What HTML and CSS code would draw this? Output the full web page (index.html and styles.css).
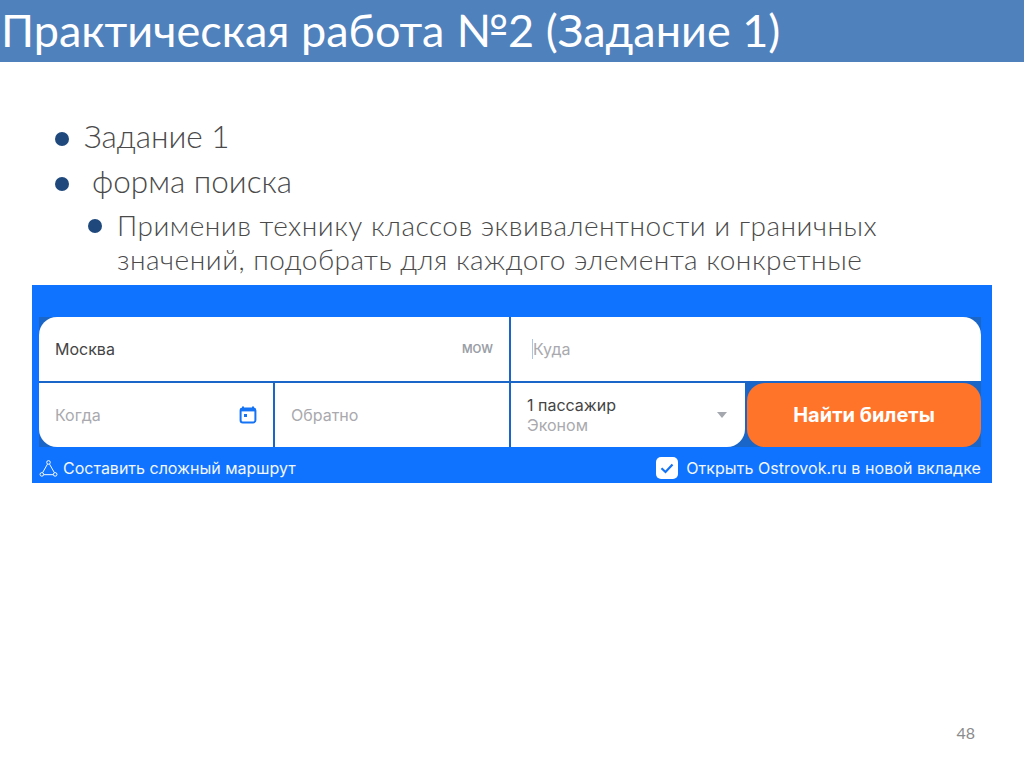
FILE: index.html
```html
<!DOCTYPE html>
<html lang="ru">
<head>
<meta charset="utf-8">
<title>Практическая работа №2</title>
<link rel="stylesheet" href="styles.css">
</head>
<body>
<div class="slide">
  <header class="title-bar"><h1 class="title">Практическая работа №2 (Задание 1)</h1></header>
  <main class="content">
    <ul class="list">
      <li class="item">Задание 1</li>
      <li class="item item-gap">форма поиска</li>
      <li class="item sub">Применив технику классов эквивалентности и граничных значений, подобрать для каждого элемента конкретные</li>
    </ul>
    <section class="form">
      <div class="grid">
        <div class="cell from"><span class="val">Москва</span><span class="code">MOW</span></div>
        <div class="cell to"><span class="caret"></span><span class="ph">Куда</span></div>
        <div class="cell when"><span class="ph">Когда</span>
          <svg class="cal" viewBox="0 0 18 18" width="18" height="18"><path d="M4 0.5v3M14 0.5v3" stroke="#1573f5" stroke-width="2"/><rect x="1.6" y="2.4" width="14.8" height="14" rx="2.2" fill="none" stroke="#1573f5" stroke-width="2"/><rect x="1.6" y="2.4" width="14.8" height="3" fill="#1573f5"/><rect x="5" y="8" width="3" height="3" fill="#1573f5"/></svg>
        </div>
        <div class="cell back"><span class="ph">Обратно</span></div>
        <div class="cell pax"><div class="pax-text"><span class="val">1 пассажир</span><span class="ph">Эконом</span></div><span class="arrow"></span></div>
        <button class="find" type="button">Найти билеты</button>
      </div>
      <div class="foot">
        <a class="foot-link">
          <svg viewBox="0 0 20 20" width="19" height="19" class="route"><path d="M8.9 5.4 3.9 14.2M11.1 5.4l5 8.8M5 16.5h10" fill="none" stroke="#fff" stroke-width="1"/><circle cx="10" cy="3.6" r="1.9" fill="none" stroke="#fff" stroke-width="1"/><circle cx="3" cy="16.2" r="1.9" fill="none" stroke="#fff" stroke-width="1"/><circle cx="17" cy="16.2" r="1.9" fill="none" stroke="#fff" stroke-width="1"/></svg>
          Составить сложный маршрут
        </a>
        <label class="foot-check">
          <svg viewBox="0 0 22 22" width="22" height="22"><rect width="22" height="22" rx="5" fill="#fff"/><path d="M5.5 11.2 9.5 15l7-7.5" fill="none" stroke="#1573f5" stroke-width="2.2"/></svg>
          Открыть Ostrovok.ru в новой вкладке
        </label>
      </div>
    </section>
    <div class="page">48</div>
  </main>
</div>
</body>
</html>
```
FILE: styles.css
```css
* { box-sizing: border-box; }
html, body { margin: 0; height: 100%; background: #fff; }
.slide { width: 1024px; height: 767px; display: flex; flex-direction: column; overflow: hidden; font-family: Lato, "Open Sans", sans-serif; }
.title-bar { height: 62px; flex: none; background: #4f81bd; padding: 0 0 2px 1px; display: flex; align-items: center; }
.title { margin: 0; font-size: 45px; font-weight: 400; color: #fff; line-height: 60px; white-space: nowrap; }
.content { flex: 1; display: flex; flex-direction: column; }
.list { list-style: none; margin: 0; padding: 56px 140px 0 0; height: 223px; overflow: hidden; color: #4a4a4a; font-weight: 300; }
.item { position: relative; padding-left: 84px; font-size: 31.5px; line-height: 36px; margin-bottom: 9px; }
.item::before { content: ""; position: absolute; left: 55px; top: 14px; width: 14px; height: 14px; border-radius: 50%; background: #1f497d; }
.item-gap { padding-left: 92px; }
.sub { padding-left: 117px; font-size: 28px; line-height: 34px; margin-right: -4px; margin-bottom: 0; letter-spacing: .5px; }
.sub::before { left: 88px; top: 11px; }
.form { margin: 0 32px; height: 198px; flex: none; background: #0f73ff; padding: 32px 11px 0 7px; }
.grid { display: grid; grid-template-columns: repeat(4, 234px); grid-template-rows: 64px 64px; gap: 2px; background: #1a66c8; }
.cell { background: #fff; display: flex; align-items: center; font-family: Inter, sans-serif; font-size: 16px; padding-left: 16px; }
.from { grid-column: span 2; border-radius: 18px 0 0 0; justify-content: space-between; padding-right: 16px; }
.to { grid-column: span 2; border-radius: 0 18px 0 0; padding-left: 21px; }
.when { border-radius: 0 0 0 18px; justify-content: space-between; padding-right: 16px; }
.pax { border-radius: 0 0 18px 0; justify-content: space-between; padding-right: 18px; }
.val { color: #444; }
.ph { color: #a9a9ae; }
.code { color: #9a9ea6; font-size: 11.5px; font-weight: 600; }
.caret { width: 1px; height: 20px; background: #aac4e8; }
.pax-text { display: flex; flex-direction: column; gap: 2px; line-height: 18px; }
.arrow { width: 0; height: 0; border: 5px solid transparent; border-top: 6px solid #a4a8ae; border-bottom: 0; }
.find { border: 0; padding: 0; margin: 0; background: #ff7429; color: #fff; font: 700 20px Inter, sans-serif; border-radius: 18px; }
.foot { display: flex; justify-content: space-between; align-items: center; height: 22px; margin-top: 10px; color: #f2f7ff; font-family: Inter, sans-serif; font-size: 16px; }
.foot-link, .foot-check { display: flex; align-items: center; gap: 5px; }
.foot-check { gap: 8px; letter-spacing: .06px; }
.page { margin-top: auto; padding: 0 49px 24px 0; text-align: right; color: #8b8b8b; font-size: 16px; line-height: 20px; }
```
